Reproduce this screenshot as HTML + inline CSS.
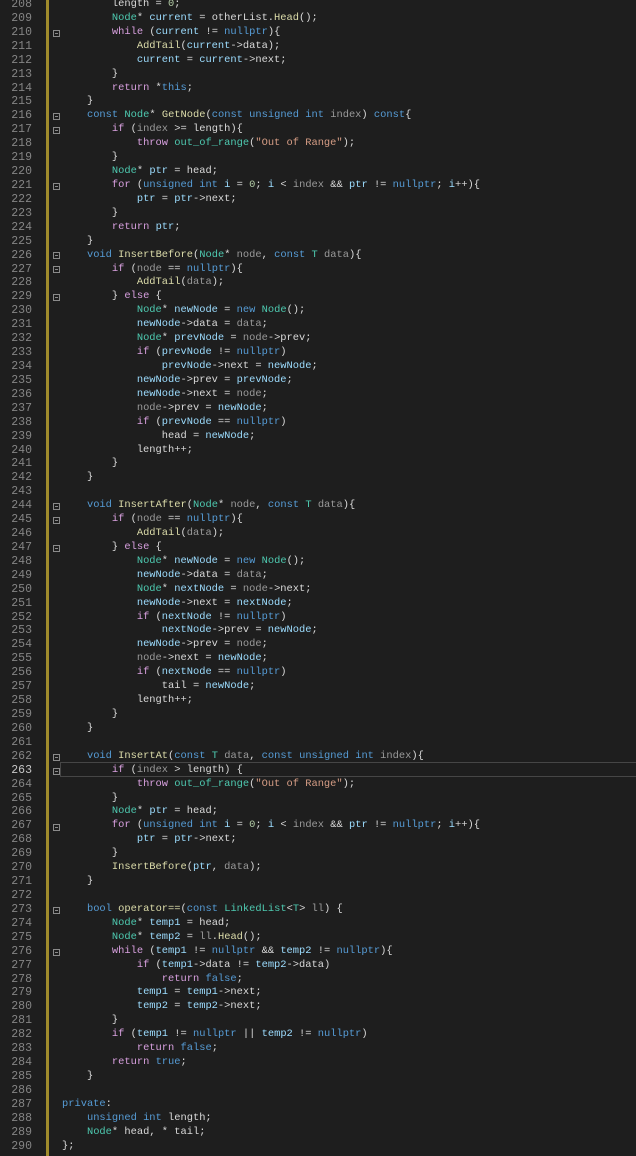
<!DOCTYPE html>
<html><head><meta charset="utf-8"><style>
html,body{margin:0;padding:0;background:#1e1e1e;width:636px;height:1156px;overflow:hidden}
#g{position:absolute;left:0;top:-2px;width:40px;font:11.5px/13.93px "Liberation Mono",monospace;color:#858585;text-align:right}
#g div{height:13.93px;padding-right:8px}
#code{position:absolute;left:62px;top:-2px;font:10.4px/13.93px "Liberation Mono",monospace;color:#dadada}
#code div{height:13.93px;white-space:pre}
.k{color:#569cd6}.c{color:#d8a0df}.t{color:#4ec9b0}.f{color:#dcdcaa}.v{color:#9cdcfe}.p{color:#9a9a9a}.s{color:#d69d85}.n{color:#b5cea8}
#bar{position:absolute;left:46px;top:0;width:3px;height:1156px;background:#a08b2c}
#hl{position:absolute;left:60px;top:762px;width:580px;height:13px;border:1px solid #464646}
.fm{position:absolute;left:53px;width:7px;height:7px;border:1px solid #8a8a8a;box-sizing:border-box}
.fm:after{content:"";position:absolute;left:1px;top:2px;width:3px;height:1px;background:#8a8a8a}
</style></head><body>
<div id="bar"></div>
<div id="hl"></div>
<div id="g">
<div>208</div><div>209</div><div>210</div><div>211</div><div>212</div><div>213</div><div>214</div><div>215</div><div>216</div><div>217</div><div>218</div><div>219</div><div>220</div><div>221</div><div>222</div><div>223</div><div>224</div><div>225</div><div>226</div><div>227</div><div>228</div><div>229</div><div>230</div><div>231</div><div>232</div><div>233</div><div>234</div><div>235</div><div>236</div><div>237</div><div>238</div><div>239</div><div>240</div><div>241</div><div>242</div><div>243</div><div>244</div><div>245</div><div>246</div><div>247</div><div>248</div><div>249</div><div>250</div><div>251</div><div>252</div><div>253</div><div>254</div><div>255</div><div>256</div><div>257</div><div>258</div><div>259</div><div>260</div><div>261</div><div>262</div><div style="color:#c6c6c6">263</div><div>264</div><div>265</div><div>266</div><div>267</div><div>268</div><div>269</div><div>270</div><div>271</div><div>272</div><div>273</div><div>274</div><div>275</div><div>276</div><div>277</div><div>278</div><div>279</div><div>280</div><div>281</div><div>282</div><div>283</div><div>284</div><div>285</div><div>286</div><div>287</div><div>288</div><div>289</div><div>290</div>
</div>
<div class="fm" style="top:30px"></div><div class="fm" style="top:113px"></div><div class="fm" style="top:127px"></div><div class="fm" style="top:183px"></div><div class="fm" style="top:252px"></div><div class="fm" style="top:266px"></div><div class="fm" style="top:294px"></div><div class="fm" style="top:503px"></div><div class="fm" style="top:517px"></div><div class="fm" style="top:545px"></div><div class="fm" style="top:754px"></div><div class="fm" style="top:768px"></div><div class="fm" style="top:824px"></div><div class="fm" style="top:907px"></div><div class="fm" style="top:949px"></div>
<div id="code">
<div>        length = <span class="n">0</span>;</div>
<div>        <span class="t">Node</span>* <span class="v">current</span> = otherList.<span class="f">Head</span>();</div>
<div>        <span class="c">while</span> (<span class="v">current</span> != <span class="k">nullptr</span>){</div>
<div>            <span class="f">AddTail</span>(<span class="v">current</span>-&gt;data);</div>
<div>            <span class="v">current</span> = <span class="v">current</span>-&gt;next;</div>
<div>        }</div>
<div>        <span class="c">return</span> *<span class="k">this</span>;</div>
<div>    }</div>
<div>    <span class="k">const</span> <span class="t">Node</span>* <span class="f">GetNode</span>(<span class="k">const unsigned int</span> <span class="p">index</span>) <span class="k">const</span>{</div>
<div>        <span class="c">if</span> (<span class="p">index</span> &gt;= length){</div>
<div>            <span class="c">throw</span> <span class="t">out_of_range</span>(<span class="s">"Out of Range"</span>);</div>
<div>        }</div>
<div>        <span class="t">Node</span>* <span class="v">ptr</span> = head;</div>
<div>        <span class="c">for</span> (<span class="k">unsigned int</span> <span class="v">i</span> = <span class="n">0</span>; <span class="v">i</span> &lt; <span class="p">index</span> &amp;&amp; <span class="v">ptr</span> != <span class="k">nullptr</span>; <span class="v">i</span>++){</div>
<div>            <span class="v">ptr</span> = <span class="v">ptr</span>-&gt;next;</div>
<div>        }</div>
<div>        <span class="c">return</span> <span class="v">ptr</span>;</div>
<div>    }</div>
<div>    <span class="k">void</span> <span class="f">InsertBefore</span>(<span class="t">Node</span>* <span class="p">node</span>, <span class="k">const</span> <span class="t">T</span> <span class="p">data</span>){</div>
<div>        <span class="c">if</span> (<span class="p">node</span> == <span class="k">nullptr</span>){</div>
<div>            <span class="f">AddTail</span>(<span class="p">data</span>);</div>
<div>        } <span class="c">else</span> {</div>
<div>            <span class="t">Node</span>* <span class="v">newNode</span> = <span class="k">new</span> <span class="t">Node</span>();</div>
<div>            <span class="v">newNode</span>-&gt;data = <span class="p">data</span>;</div>
<div>            <span class="t">Node</span>* <span class="v">prevNode</span> = <span class="p">node</span>-&gt;prev;</div>
<div>            <span class="c">if</span> (<span class="v">prevNode</span> != <span class="k">nullptr</span>)</div>
<div>                <span class="v">prevNode</span>-&gt;next = <span class="v">newNode</span>;</div>
<div>            <span class="v">newNode</span>-&gt;prev = <span class="v">prevNode</span>;</div>
<div>            <span class="v">newNode</span>-&gt;next = <span class="p">node</span>;</div>
<div>            <span class="p">node</span>-&gt;prev = <span class="v">newNode</span>;</div>
<div>            <span class="c">if</span> (<span class="v">prevNode</span> == <span class="k">nullptr</span>)</div>
<div>                head = <span class="v">newNode</span>;</div>
<div>            length++;</div>
<div>        }</div>
<div>    }</div>
<div> </div>
<div>    <span class="k">void</span> <span class="f">InsertAfter</span>(<span class="t">Node</span>* <span class="p">node</span>, <span class="k">const</span> <span class="t">T</span> <span class="p">data</span>){</div>
<div>        <span class="c">if</span> (<span class="p">node</span> == <span class="k">nullptr</span>){</div>
<div>            <span class="f">AddTail</span>(<span class="p">data</span>);</div>
<div>        } <span class="c">else</span> {</div>
<div>            <span class="t">Node</span>* <span class="v">newNode</span> = <span class="k">new</span> <span class="t">Node</span>();</div>
<div>            <span class="v">newNode</span>-&gt;data = <span class="p">data</span>;</div>
<div>            <span class="t">Node</span>* <span class="v">nextNode</span> = <span class="p">node</span>-&gt;next;</div>
<div>            <span class="v">newNode</span>-&gt;next = <span class="v">nextNode</span>;</div>
<div>            <span class="c">if</span> (<span class="v">nextNode</span> != <span class="k">nullptr</span>)</div>
<div>                <span class="v">nextNode</span>-&gt;prev = <span class="v">newNode</span>;</div>
<div>            <span class="v">newNode</span>-&gt;prev = <span class="p">node</span>;</div>
<div>            <span class="p">node</span>-&gt;next = <span class="v">newNode</span>;</div>
<div>            <span class="c">if</span> (<span class="v">nextNode</span> == <span class="k">nullptr</span>)</div>
<div>                tail = <span class="v">newNode</span>;</div>
<div>            length++;</div>
<div>        }</div>
<div>    }</div>
<div> </div>
<div>    <span class="k">void</span> <span class="f">InsertAt</span>(<span class="k">const</span> <span class="t">T</span> <span class="p">data</span>, <span class="k">const unsigned int</span> <span class="p">index</span>){</div>
<div>        <span class="c">if</span> (<span class="p">index</span> &gt; length) {</div>
<div>            <span class="c">throw</span> <span class="t">out_of_range</span>(<span class="s">"Out of Range"</span>);</div>
<div>        }</div>
<div>        <span class="t">Node</span>* <span class="v">ptr</span> = head;</div>
<div>        <span class="c">for</span> (<span class="k">unsigned int</span> <span class="v">i</span> = <span class="n">0</span>; <span class="v">i</span> &lt; <span class="p">index</span> &amp;&amp; <span class="v">ptr</span> != <span class="k">nullptr</span>; <span class="v">i</span>++){</div>
<div>            <span class="v">ptr</span> = <span class="v">ptr</span>-&gt;next;</div>
<div>        }</div>
<div>        <span class="f">InsertBefore</span>(<span class="v">ptr</span>, <span class="p">data</span>);</div>
<div>    }</div>
<div> </div>
<div>    <span class="k">bool</span> <span class="f">operator==</span>(<span class="k">const</span> <span class="t">LinkedList</span>&lt;<span class="t">T</span>&gt; <span class="p">ll</span>) {</div>
<div>        <span class="t">Node</span>* <span class="v">temp1</span> = head;</div>
<div>        <span class="t">Node</span>* <span class="v">temp2</span> = <span class="p">ll</span>.<span class="f">Head</span>();</div>
<div>        <span class="c">while</span> (<span class="v">temp1</span> != <span class="k">nullptr</span> &amp;&amp; <span class="v">temp2</span> != <span class="k">nullptr</span>){</div>
<div>            <span class="c">if</span> (<span class="v">temp1</span>-&gt;data != <span class="v">temp2</span>-&gt;data)</div>
<div>                <span class="c">return</span> <span class="k">false</span>;</div>
<div>            <span class="v">temp1</span> = <span class="v">temp1</span>-&gt;next;</div>
<div>            <span class="v">temp2</span> = <span class="v">temp2</span>-&gt;next;</div>
<div>        }</div>
<div>        <span class="c">if</span> (<span class="v">temp1</span> != <span class="k">nullptr</span> || <span class="v">temp2</span> != <span class="k">nullptr</span>)</div>
<div>            <span class="c">return</span> <span class="k">false</span>;</div>
<div>        <span class="c">return</span> <span class="k">true</span>;</div>
<div>    }</div>
<div> </div>
<div><span class="k">private</span>:</div>
<div>    <span class="k">unsigned int</span> length;</div>
<div>    <span class="t">Node</span>* head, * tail;</div>
<div>};</div>
</div>
</body></html>
